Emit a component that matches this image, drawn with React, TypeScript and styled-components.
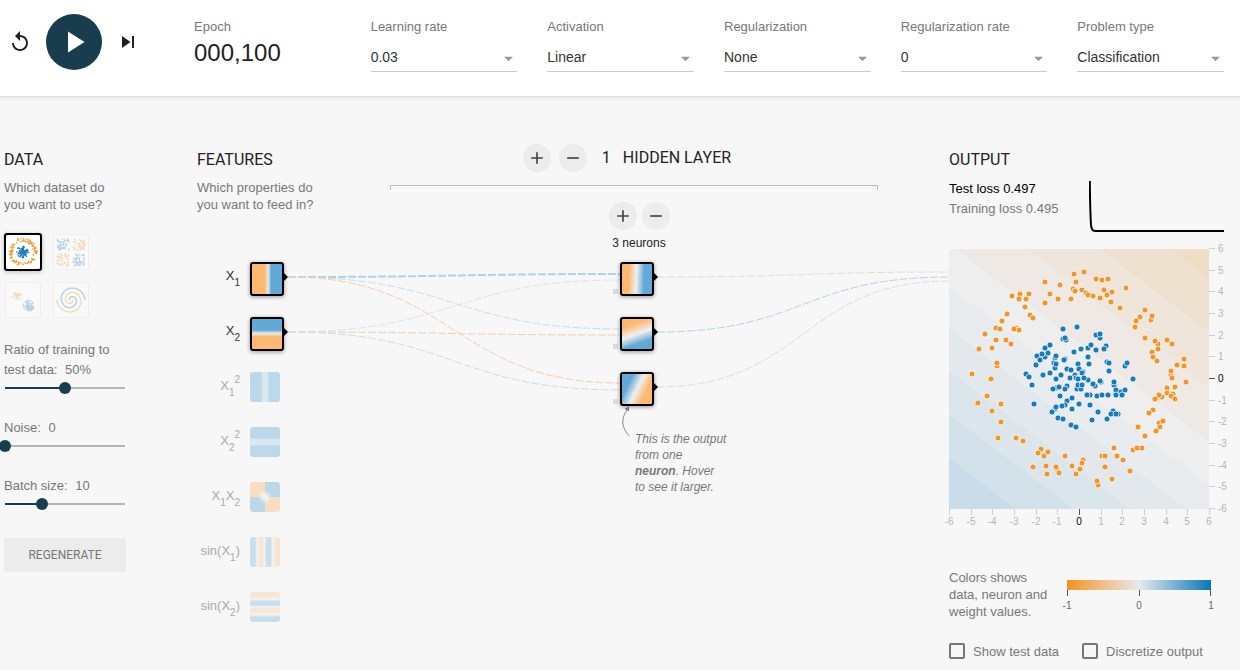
import React, { useState } from "react";
import styled, { createGlobalStyle, css } from "styled-components";
import { MdAdd, MdArrowDropDown, MdPlayArrow, MdRemove, MdReplay, MdSkipNext } from "react-icons/md";

const ORANGE = "#fdb871";
const BLUE = "#62a9d7";
const PALE = "#e8eaeb";
const DOT_ORANGE = "#f0962e";
const DOT_BLUE = "#1a7abb";
const INK = "#183d4e";
const SANS = `"Liberation Sans", Arial, sans-serif`;
const ROBOTO = `Roboto, "Liberation Sans", sans-serif`;

const GlobalStyle = createGlobalStyle`
  *, *::before, *::after { box-sizing: border-box; }
  body {
    margin: 0;
    background: #f7f7f7;
    color: #777;
    font: 13px/17px ${SANS};
    overflow-x: hidden;
  }
  button, select, input { font-family: inherit; margin: 0; }
  h1, h2, p { margin: 0; }
  svg { display: block; }
`;

/* ---------- top bar ---------- */

const TopBar = styled.header`
  display: flex;
  height: 97px;
  padding-right: 16px;
  background: #fff;
  border-bottom: 1px solid #dedede;
  box-shadow: 0 1px 4px rgba(0, 0, 0, 0.08);
`;

const Playback = styled.div`
  display: flex;
  align-items: center;
  flex: 0 0 194px;
  gap: 14px;
  height: 84px;
  padding-left: 8px;
`;

const IconButton = styled.button`
  display: grid;
  place-items: center;
  width: 24px;
  height: 24px;
  padding: 0;
  border: 0;
  background: none;
  color: #222;
`;

const PlayButton = styled(IconButton)`
  width: 56px;
  height: 56px;
  border-radius: 50%;
  background: ${INK};
  color: #fff;
`;

const Settings = styled.div`
  display: grid;
  flex: 1;
  grid-template-columns: repeat(6, 1fr);
  gap: 30px;
  padding-top: 18px;
`;

const Setting = styled.div`
  min-width: 0;
`;

const SettingLabel = styled.label`
  display: block;
`;

const Epoch = styled.output`
  display: block;
  margin-top: 4px;
  color: #222;
  font-size: 24px;
  line-height: 28px;
`;

const SelectBox = styled.div`
  position: relative;
  margin-top: 8px;

  svg {
    position: absolute;
    top: 5px;
    right: -2px;
    color: #999;
    pointer-events: none;
  }
`;

const Select = styled.select`
  display: block;
  width: 100%;
  height: 29px;
  padding: 0;
  border: 0;
  border-bottom: 1px solid #ccc;
  border-radius: 0;
  background: none;
  color: #333;
  font-size: 14px;
  appearance: none;
`;

/* ---------- page columns ---------- */

const Main = styled.main`
  display: grid;
  grid-template-columns: 122px minmax(620px, 1fr) 275px;
  padding: 47px 16px 8px 4px;
`;

const Column = styled.section`
  padding-top: 6px;
`;

const Title = styled.h2`
  color: #222;
  font: 400 16px/20px ${ROBOTO};
`;

const Lead = styled.p`
  margin-top: 9px;
`;

/* ---------- data column ---------- */

const Datasets = styled.div`
  display: grid;
  grid-template-columns: 38px 38px;
  gap: 10px;
  margin: 20px 0 21px;
`;

const DatasetButton = styled.button<{ $active?: boolean }>`
  height: 38px;
  padding: 2px;
  border: 2px solid #000;
  border-radius: 3px;
  background: #fff;
  box-shadow: 0 1px 4px rgba(0, 0, 0, 0.25);

  svg { width: 100%; height: 100%; }

  ${(p) =>
    !p.$active &&
    css`
      height: 36px;
      margin: 1px;
      border: 1px solid #ddd;
      box-shadow: none;
      opacity: 0.3;
    `}
`;

const SliderField = styled.div`
  margin-bottom: 24px;
  line-height: 20px;

  label { display: block; }
  span { margin-left: 4px; }
`;

const Slider = styled.input`
  display: block;
  width: calc(100% + 10px);
  height: 12px;
  margin: 2px -5px 0;
  appearance: none;
  background: linear-gradient(to right, ${INK} var(--fill), #b5b5b5 var(--fill)) center / calc(100% - 12px) 2px no-repeat;

  &::-webkit-slider-thumb {
    width: 12px;
    height: 12px;
    border: 0;
    border-radius: 50%;
    background: ${INK};
    appearance: none;
  }
`;

const Regenerate = styled.button`
  display: block;
  width: 100%;
  height: 34px;
  margin-top: 28px;
  border: 0;
  border-radius: 2px;
  background: #ececec;
  color: #777;

  && { font: 400 12px/17px ${ROBOTO}; }
`;

/* ---------- network ---------- */

const Network = styled.section`
  position: relative;
  display: flex;
  padding: 0 65px 0 71px;
`;

const Wires = styled.svg`
  position: absolute;
  top: 118px;
  left: 162px;
  width: calc(100% - 162px);
  height: 150px;
  overflow: visible;
  pointer-events: none;

  path {
    fill: none;
    stroke-dasharray: 8 2;
    vector-effect: non-scaling-stroke;
  }
`;

const Features = styled.div`
  flex: 0 0 193px;
  padding-top: 6px;
`;

const FeatureIntro = styled.div`
  height: 112px;
`;

const FeatureList = styled.ul`
  display: grid;
  grid-auto-rows: 34px;
  gap: 21px;
  margin: 0;
  padding: 0;
  list-style: none;
`;

const Feature = styled.li<{ $active?: boolean }>`
  display: grid;
  grid-template-columns: 43px 34px;
  gap: 10px;
  color: ${(p) => (p.$active ? "#333" : "#aaa")};
`;

const FeatureName = styled.span`
  padding-top: 4px;
  font-size: 13px;
  line-height: 20px;
  text-align: right;
  white-space: nowrap;

  sub, sup { font-size: 10px; line-height: 0; }
  sub { vertical-align: -6px; }
  sup { vertical-align: 7px; }
`;

const Tile = styled.button<{ $fill: string; $active?: boolean }>`
  position: relative;
  display: block;
  width: 30px;
  height: 30px;
  padding: 0;
  border: 0;
  border-radius: 3px;
  background: ${(p) => p.$fill};
  opacity: 0.4;

  ${(p) =>
    p.$active &&
    css`
      width: 34px;
      height: 34px;
      border: 2px solid #000;
      background-origin: border-box;
      box-shadow: 0 1px 4px rgba(0, 0, 0, 0.4);
      opacity: 1;

      &::after {
        content: "";
        position: absolute;
        top: 9px;
        left: 32px;
        border: solid transparent;
        border-width: 4px 0 4px 4px;
        border-left-color: #000;
      }
    `}
`;

const Hidden = styled.div`
  display: flex;
  flex: 1;
  flex-direction: column;
  align-items: center;
`;

const LayerHead = styled.div`
  display: flex;
  align-items: center;
  gap: 8px;
  height: 28px;
  padding-right: 20px;
`;

const LayerTitle = styled(Title)`
  margin-left: 7px;

  span { margin-right: 12px; }
`;

const RoundButton = styled(IconButton)`
  width: 28px;
  height: 28px;
  border-radius: 50%;
  background: #ececec;
  color: #444;
`;

const Bracket = styled.div`
  align-self: stretch;
  height: 5px;
  margin: 13px 6px 0 0;
  border: 1px solid #bbb;
  border-bottom: 0;
`;

const NeuronControls = styled.div`
  display: flex;
  flex-wrap: wrap;
  align-content: flex-start;
  justify-content: center;
  gap: 5px;
  width: 65px;
  height: 60px;
  margin-top: 12px;
  padding-left: 4px;
`;

const NeuronCount = styled.span`
  color: #222;
  font-size: 12px;
  white-space: nowrap;
`;

const Neurons = styled.div`
  position: relative;
  display: grid;
  gap: 21px;
`;

const NeuronCell = styled.div`
  position: relative;

  &::before {
    content: "";
    position: absolute;
    bottom: 2px;
    left: -7px;
    width: 5px;
    height: 5px;
    background: #dcdcdc;
  }
`;

const Callout = styled.p`
  position: absolute;
  top: 169px;
  left: 15px;
  width: 96px;
  font-size: 12px;
  line-height: 16px;
  font-style: italic;

  svg { position: absolute; top: -25px; left: -15px; }
`;

/* ---------- output ---------- */

const LossRow = styled.div`
  display: flex;
  justify-content: space-between;
  height: 70px;
  margin-top: 9px;
  line-height: 20px;
`;

const TestLoss = styled.p`
  color: #000;
`;

const Plot = styled.svg`
  overflow: visible;

  text { fill: #b5b5b5; font: 10px ${SANS}; }
  line { stroke: #d0d0d0; }
  .zero text { fill: #000; }
  .zero line { stroke: #555; }
`;

const Legend = styled.div`
  display: flex;
  gap: 12px;
  margin-top: 40px;

  p { width: 106px; }
`;

const Scale = styled.svg`
  margin-top: 11px;
  overflow: visible;

  text { fill: #666; font: 10px ${SANS}; text-anchor: middle; }
  line { stroke: #555; }
`;

const Checks = styled.div`
  display: flex;
  gap: 23px;
  margin-top: 21px;
`;

const Check = styled.label`
  display: flex;
  align-items: center;
  gap: 8px;
  height: 20px;
  white-space: nowrap;
`;

const CheckBox = styled.input`
  width: 16px;
  height: 16px;
  border: 2px solid #777;
  border-radius: 2px;
  appearance: none;

  &:checked { background: ${INK}; }
`;

/* ---------- data ---------- */

const settings = [
  { id: "rate", label: "Learning rate", options: ["0.03", "0.1", "0.3"] },
  { id: "activation", label: "Activation", options: ["Linear", "ReLU", "Tanh"] },
  { id: "regularization", label: "Regularization", options: ["None", "L1", "L2"] },
  { id: "regRate", label: "Regularization rate", options: ["0", "0.001", "0.01"] },
  { id: "problem", label: "Problem type", options: ["Classification", "Regression"] },
];

const X1 = <>X<sub>1</sub></>;
const X2 = <>X<sub>2</sub></>;

const features = [
  { id: "x1", active: true, name: X1, fill: `linear-gradient(to right, ${ORANGE} 42%, ${PALE} 54%, ${BLUE} 62%)` },
  { id: "x2", active: true, name: X2, fill: `linear-gradient(to bottom, ${BLUE} 38%, ${PALE} 48%, ${ORANGE} 58%)` },
  { id: "x1sq", name: <>{X1}<sup>2</sup></>, fill: `linear-gradient(to right, ${BLUE} 36%, #aed0e6 42% 58%, ${BLUE} 64%)` },
  { id: "x2sq", name: <>{X2}<sup>2</sup></>, fill: `linear-gradient(to bottom, ${BLUE} 36%, #aed0e6 42% 58%, ${BLUE} 64%)` },
  {
    id: "x1x2",
    name: <>{X1}{X2}</>,
    fill: `radial-gradient(circle, #eee 8%, transparent 32%), conic-gradient(${BLUE} 25%, ${ORANGE} 25% 50%, ${BLUE} 50% 75%, ${ORANGE} 75%)`,
  },
  {
    id: "sin1",
    name: <>sin({X1})</>,
    fill: `linear-gradient(to right, #7fb9dd 16%, #eee 25%, #fbcb9a 34% 42%, #e8eaeb 48%, #7fb9dd 56% 68%, #eee 76%, #fbcb9a 86%)`,
  },
  {
    id: "sin2",
    name: <>sin({X2})</>,
    fill: `linear-gradient(to bottom, #fbcb9a 14%, #eee 24%, #7fb9dd 32% 42%, #e8eaeb 50%, #fbcb9a 58% 66%, #eee 75%, #7fb9dd 84%)`,
  },
];

const neurons = [
  `linear-gradient(92deg, ${ORANGE} 26%, #f0f0f0 48%, ${BLUE} 70%)`,
  `linear-gradient(160deg, ${ORANGE} 26%, #f0f0f0 50%, ${BLUE} 72%)`,
  `linear-gradient(116deg, ${BLUE} 28%, #f0f0f0 50%, ${ORANGE} 70%)`,
];

const wires = [
  { d: "M0 15C166 15 166 12 332 12", color: "#b0d2e6", width: 2 },
  { d: "M0 15C166 15 166 67 332 67", color: "#cadeea", width: 1 },
  { d: "M0 15C166 15 166 121 332 121", color: "#efd0b0", width: 1 },
  { d: "M0 70C166 70 166 18 332 18", color: "#e4e4e2", width: 1 },
  { d: "M0 70C166 70 166 73 332 73", color: "#efd0b0", width: 1 },
  { d: "M0 70C166 70 166 128 332 128", color: "#cadeea", width: 1 },
  { d: "M369 15C515 15 515 10 661 10", color: "#e2deda", width: 1 },
  { d: "M369 70C515 70 515 15 661 15", color: "#b5d3e6", width: 1 },
  { d: "M369 125C515 125 515 19 661 19", color: "#dcdfe0", width: 1 },
];

type Point = [number, number];

const outerRing: Point[] = [
  [125, 25], [135, 23], [127, 33], [96, 33], [111, 36], [124, 40], [126, 42], [133, 41], [101, 45], [109, 50],
  [122, 50], [96, 54], [63, 47], [71, 45], [80, 45], [70, 50], [77, 50], [76, 58], [58, 65], [81, 66],
  [84, 69], [53, 72], [47, 79], [51, 80], [67, 79], [70, 81], [65, 80], [36, 85], [47, 91], [57, 91],
  [62, 95], [30, 100], [43, 99], [48, 117], [48, 114], [23, 125], [42, 130], [38, 147], [28, 155], [29, 154],
  [52, 155], [43, 162], [52, 173], [49, 189], [67, 189], [74, 192], [92, 200], [89, 204], [95, 207], [99, 203],
  [116, 207], [84, 218], [97, 217], [98, 225], [108, 220], [107, 218], [110, 224], [123, 217], [131, 220],
  [127, 225], [134, 211], [133, 214], [147, 30], [153, 31], [159, 30], [155, 41], [177, 39], [137, 44],
  [139, 46], [144, 47], [151, 49], [158, 46], [163, 43], [162, 53], [171, 59], [196, 61], [202, 71], [203, 67],
  [191, 68], [187, 72], [186, 78], [196, 89], [209, 95], [206, 92], [218, 91], [223, 95], [209, 100],
  [203, 103], [204, 108], [208, 112], [235, 110], [228, 116], [235, 117], [222, 126], [222, 122], [223, 129],
  [237, 133], [218, 139], [226, 138], [218, 144], [224, 145], [222, 147], [226, 150], [213, 148], [210, 146],
  [206, 150], [204, 161], [200, 164], [210, 174], [214, 172], [211, 178], [207, 182], [189, 178], [196, 187],
  [165, 199], [184, 201], [188, 199], [193, 199], [153, 207], [156, 207], [168, 207], [174, 211], [156, 218],
  [181, 222], [163, 230], [149, 236], [148, 232],
];

const innerDisc: Point[] = [
  [114, 80], [128, 78], [114, 90], [117, 91], [116, 89], [101, 96], [96, 99], [125, 103], [132, 100], [139, 99],
  [142, 96], [88, 107], [96, 108], [93, 105], [99, 104], [91, 111], [106, 109], [107, 107], [116, 110], [115, 111],
  [139, 108], [87, 116], [105, 114], [106, 119], [107, 115], [129, 115], [140, 115], [118, 120], [122, 121],
  [130, 120], [134, 123], [133, 124], [77, 125], [80, 128], [94, 126], [101, 124], [112, 126], [107, 130],
  [121, 129], [126, 126], [127, 129], [129, 130], [139, 131], [135, 129], [83, 136], [107, 139], [104, 140],
  [110, 138], [118, 137], [116, 140], [128, 140], [132, 140], [129, 136], [133, 136], [111, 147], [123, 149],
  [138, 146], [118, 152], [85, 155], [106, 160], [116, 156], [113, 157], [107, 158], [103, 163], [123, 160],
  [130, 155], [109, 169], [114, 170], [122, 176], [127, 178], [151, 89], [147, 86], [151, 85], [147, 101],
  [157, 97], [155, 100], [158, 113], [160, 114], [160, 122], [176, 117], [178, 114], [184, 130], [146, 137],
  [144, 135], [152, 133], [151, 132], [165, 136], [165, 133], [167, 141], [172, 143], [176, 141], [167, 146],
  [173, 146], [141, 146], [138, 146], [148, 147], [153, 146], [159, 146], [141, 156], [149, 163], [143, 171],
  [158, 170], [164, 162], [162, 165], [169, 165], [167, 165],
];

/* Each band covers everything above its lower-left edge, so later bands paint over earlier ones. */
const bands: [number, string][] = [
  [460, "#cadce9"], [209, "#d3e1eb"], [165, "#dbe5ec"], [122, "#e2e8ec"], [79, "#e9ecee"], [38, "#eeeeee"],
  [-5, "#eee9e5"], [-60, "#efe5db"], [-115, "#efe1d0"], [-168, "#efddc6"],
];

const ticks = Array.from({ length: 13 }, (_, i) => ({ value: i - 6, at: Math.round((i * 260) / 12) }));

function scatter(count: number, seed: number, place: (a: number, b: number) => Point): Point[] {
  let s = seed;
  const next = () => {
    s = (s * 16807) % 2147483647;
    return s / 2147483647;
  };
  next();
  return Array.from({ length: count }, () => place(next(), next()));
}

const polar = (cx: number, cy: number, r: number, turn: number): Point => [
  cx + r * Math.cos(turn * Math.PI * 2),
  cy + r * Math.sin(turn * Math.PI * 2),
];

function Dots({ points, color }: { points: Point[]; color: string }) {
  return (
    <g fill={color}>
      {points.map(([x, y], i) => (
        <circle key={i} cx={x} cy={y} r={0.8} />
      ))}
    </g>
  );
}

function spiral(offset: number) {
  return Array.from({ length: 50 }, (_, i) => {
    const [x, y] = polar(16, 16, 1 + (i / 49) * 14, offset + (i / 49) * 1.5);
    return `${i ? "L" : "M"}${x.toFixed(1)} ${y.toFixed(1)}`;
  }).join("");
}

const thumbnails = [
  {
    name: "Circle",
    art: (
      <>
        <Dots color={DOT_ORANGE} points={scatter(130, 11, (a, b) => polar(16, 16, 11 + a * 4, b))} />
        <Dots color={DOT_BLUE} points={scatter(110, 5, (a, b) => polar(16, 16, a * 7, b))} />
      </>
    ),
  },
  {
    name: "Exclusive or",
    art: (
      <>
        <Dots color={DOT_BLUE} points={scatter(60, 3, (a, b) => [1 + a * 13, 2 + b * 12])} />
        <Dots color={DOT_BLUE} points={scatter(60, 7, (a, b) => [18 + a * 13, 18 + b * 13])} />
        <Dots color={DOT_ORANGE} points={scatter(60, 13, (a, b) => [18 + a * 13, 2 + b * 12])} />
        <Dots color={DOT_ORANGE} points={scatter(60, 19, (a, b) => [1 + a * 13, 18 + b * 13])} />
      </>
    ),
  },
  {
    name: "Gaussian",
    art: (
      <>
        <Dots color={DOT_ORANGE} points={scatter(55, 23, (a, b) => polar(10, 11, a * a * 6, b))} />
        <Dots color={DOT_BLUE} points={scatter(90, 29, (a, b) => polar(22, 22, a * 6, b))} />
      </>
    ),
  },
  {
    name: "Spiral",
    art: (
      <g fill="none" strokeWidth="1.5">
        <path d={spiral(0)} stroke={DOT_ORANGE} />
        <path d={spiral(0.5)} stroke={DOT_BLUE} />
      </g>
    ),
  },
];

/* ---------- parts ---------- */

function RangeField(props: { id: string; label: string; unit?: string; min: number; max: number; initial: number }) {
  const { id, label, unit = "", min, max, initial } = props;
  const [value, setValue] = useState(initial);
  const fill = `${((value - min) / (max - min)) * 100}%`;
  return (
    <SliderField>
      <label htmlFor={id}>
        {`${label}: `}
        <span>{`${value}${unit}`}</span>
      </label>
      <Slider
        id={id}
        type="range"
        min={min}
        max={max}
        value={value}
        onChange={(e) => setValue(Number(e.target.value))}
        style={{ "--fill": fill } as React.CSSProperties}
      />
    </SliderField>
  );
}

function AddRemove({ what }: { what: string }) {
  return (
    <>
      <RoundButton aria-label={`Add ${what}`}><MdAdd size={20} /></RoundButton>
      <RoundButton aria-label={`Remove ${what}`}><MdRemove size={20} /></RoundButton>
    </>
  );
}

function OutputPlot() {
  return (
    <Plot width="275" height="280" role="img" aria-label="Output heat map">
      <defs>
        <clipPath id="plotArea"><rect width="260" height="260" /></clipPath>
      </defs>
      <g clipPath="url(#plotArea)">
        {bands.map(([edge, color]) => (
          <path key={edge} fill={color} d={`M0 ${edge}L260 ${edge + 198}V-300H0Z`} />
        ))}
      </g>
      {ticks.map(({ value, at }) => (
        <g key={value} className={value === 0 ? "zero" : undefined}>
          <line x1={at + 0.5} x2={at + 0.5} y1="260" y2="266" />
          <text x={at} y="276" textAnchor="middle">{value}</text>
          <line x1="260" x2="266" y1={259.5 - at} y2={259.5 - at} />
          <text x="269" y={263 - at}>{value}</text>
        </g>
      ))}
      <g stroke="#fff" strokeWidth="1" strokeOpacity="0.7">
        {outerRing.map(([x, y], i) => <circle key={i} cx={x} cy={y} r="3" fill={DOT_ORANGE} />)}
        {innerDisc.map(([x, y], i) => <circle key={i} cx={x} cy={y} r="3" fill={DOT_BLUE} />)}
      </g>
    </Plot>
  );
}

export default function App() {
  return (
    <>
      <GlobalStyle />
      <TopBar>
        <Playback>
          <IconButton aria-label="Reset"><MdReplay size={24} /></IconButton>
          <PlayButton aria-label="Run"><MdPlayArrow size={36} /></PlayButton>
          <IconButton aria-label="Step"><MdSkipNext size={24} /></IconButton>
        </Playback>
        <Settings>
          <Setting>
            <SettingLabel htmlFor="epoch">Epoch</SettingLabel>
            <Epoch id="epoch">000,100</Epoch>
          </Setting>
          {settings.map((s) => (
            <Setting key={s.id}>
              <SettingLabel htmlFor={s.id}>{s.label}</SettingLabel>
              <SelectBox>
                <Select id={s.id}>
                  {s.options.map((o) => <option key={o}>{o}</option>)}
                </Select>
                <MdArrowDropDown size={21} />
              </SelectBox>
            </Setting>
          ))}
        </Settings>
      </TopBar>

      <Main>
        <Column>
          <Title>DATA</Title>
          <Lead>Which dataset do you want to use?</Lead>
          <Datasets>
            {thumbnails.map((t, i) => (
              <DatasetButton key={t.name} aria-label={t.name} $active={i === 0}>
                <svg viewBox="0 0 32 32">{t.art}</svg>
              </DatasetButton>
            ))}
          </Datasets>
          <RangeField id="ratio" label="Ratio of training to test data" unit="%" min={0} max={100} initial={50} />
          <RangeField id="noise" label="Noise" min={0} max={50} initial={0} />
          <RangeField id="batch" label="Batch size" min={1} max={30} initial={10} />
          <Regenerate>REGENERATE</Regenerate>
        </Column>

        <Network>
          <Wires viewBox="0 0 661 150" preserveAspectRatio="none" aria-hidden="true">
            {wires.map((w) => <path key={w.d} d={w.d} stroke={w.color} strokeWidth={w.width} />)}
          </Wires>
          <Features>
            <FeatureIntro>
              <Title>FEATURES</Title>
              <Lead>Which properties do<br />you want to feed in?</Lead>
            </FeatureIntro>
            <FeatureList>
              {features.map((f) => (
                <Feature key={f.id} $active={f.active}>
                  <FeatureName>{f.name}</FeatureName>
                  <Tile $fill={f.fill} $active={f.active} aria-label={`Feature ${f.id}`} />
                </Feature>
              ))}
            </FeatureList>
          </Features>
          <Hidden>
            <LayerHead>
              <AddRemove what="layer" />
              <LayerTitle><span>1</span>HIDDEN LAYER</LayerTitle>
            </LayerHead>
            <Bracket />
            <NeuronControls>
              <AddRemove what="neuron" />
              <NeuronCount>3 neurons</NeuronCount>
            </NeuronControls>
            <Neurons>
              {neurons.map((fill, i) => (
                <NeuronCell key={fill}>
                  <Tile $active $fill={fill} aria-label={`Neuron ${i + 1}`} />
                </NeuronCell>
              ))}
              <Callout>
                <svg width="14" height="34" aria-hidden="true">
                  <path d="M9.500 30C1 22 1 12 7 4" fill="none" stroke="#888" />
                  <path d="M9 0L9 5L4.500 3Z" fill="#777" />
                </svg>
                This is the output from one<br /><b>neuron</b>. Hover<br />to see it larger.
              </Callout>
            </Neurons>
          </Hidden>
        </Network>

        <Column>
          <Title>OUTPUT</Title>
          <LossRow>
            <div>
              <TestLoss>Test loss 0.497</TestLoss>
              <p>Training loss 0.495</p>
            </div>
            <svg width="135" height="54" role="img" aria-label="Loss over time">
              <path d="M0.800 2C1 22 1.500 38 2 46Q2.500 52 6 52H135" fill="none" stroke="#000" strokeWidth="2" />
            </svg>
          </LossRow>
          <OutputPlot />
          <Legend>
            <p>Colors shows data, neuron and weight values.</p>
            <Scale width="145" height="30" role="img" aria-label="Color scale from -1 to 1">
              <defs>
                <linearGradient id="scale">
                  <stop offset="0" stopColor="#f59322" />
                  <stop offset="0.5" stopColor="#e8eaeb" />
                  <stop offset="1" stopColor="#0877bd" />
                </linearGradient>
              </defs>
              <rect width="144" height="10" fill="url(#scale)" />
              {[-1, 0, 1].map((v) => (
                <g key={v}>
                  <line x1={72.5 + v * 72 - (v > 0 ? 1 : 0)} x2={72.5 + v * 72 - (v > 0 ? 1 : 0)} y1="10" y2="16" />
                  <text x={72 + v * 72} y="29">{v}</text>
                </g>
              ))}
            </Scale>
          </Legend>
          <Checks>
            <Check><CheckBox type="checkbox" />Show test data</Check>
            <Check><CheckBox type="checkbox" />Discretize output</Check>
          </Checks>
        </Column>
      </Main>
    </>
  );
}
